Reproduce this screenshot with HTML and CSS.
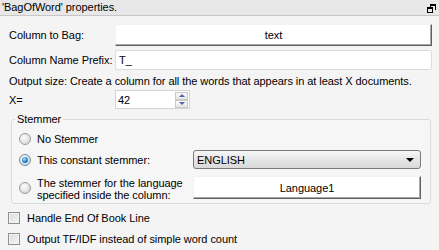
FILE: index.html
```html
<!DOCTYPE html>
<html>
<head>
<meta charset="utf-8">
<link rel="stylesheet" href="styles.css">
</head>
<body>
<div class="panel">
  <div class="titlebar">
    <span class="title">'BagOfWord' properties.</span>
    <svg class="restore" width="9" height="9" viewBox="0 0 9 9">
      <path d="M3 0h6v6h-1v-4h-4v1h-1z" fill="#000"/>
      <rect x="0.5" y="3.5" width="5" height="5" fill="#e8e8e8" stroke="#000"/>
      <rect x="0" y="3" width="6" height="2" fill="#000"/>
    </svg>
  </div>
  <div class="content">
    <div class="form-row row-bag">
      <span class="label">Column to Bag:</span>
      <div class="btn btn-wide">text</div>
    </div>
    <div class="form-row row-prefix">
      <span class="label">Column Name Prefix:</span>
      <div class="input">T_</div>
    </div>
    <div class="note">Output size: Create a column for all the words that appears in at least X documents.</div>
    <div class="form-row row-x">
      <span class="label">X=</span>
      <div class="spinner">
        <span class="spin-val">42</span>
        <div class="spin-btns">
          <span class="spin-btn"><span class="tri-up"></span></span>
          <span class="spin-btn"><span class="tri-down"></span></span>
        </div>
      </div>
    </div>
    <fieldset class="group">
      <legend>Stemmer</legend>
      <div class="opt opt-1">
        <span class="radio"></span>
        <span class="rlabel">No Stemmer</span>
      </div>
      <div class="opt opt-2">
        <span class="radio checked"><span class="dot"></span></span>
        <span class="rlabel">This constant stemmer:</span>
        <div class="combo"><span class="combo-val">ENGLISH</span><span class="combo-arrow"></span></div>
      </div>
      <div class="opt opt-3">
        <span class="radio"></span>
        <span class="rlabel two">The stemmer for the language<br>specified inside the column:</span>
        <div class="btn btn-lang">Language1</div>
      </div>
    </fieldset>
    <div class="check-row first"><span class="checkbox"></span><span class="clabel">Handle End Of Book Line</span></div>
    <div class="check-row"><span class="checkbox"></span><span class="clabel">Output TF/IDF instead of simple word count</span></div>
  </div>
</div>
</body>
</html>
```

FILE: styles.css
```css
html, body {
  margin: 0;
  padding: 0;
  background: #f4f4f4;
}
body {
  font-family: "Liberation Sans", Arial, sans-serif;
  font-size: 11px;
  letter-spacing: -0.06px;
  color: #000;
}
.panel {
  width: 439px;
  height: 250px;
  overflow: hidden;
  background: #f4f4f4;
}
.titlebar {
  height: 15px;
  border-bottom: 1px solid #c6c6c6;
  background: repeating-conic-gradient(#e3e3e3 0 25%, #ececec 0 50%) 0 0 / 2px 2px;
  display: flex;
  align-items: center;
  justify-content: space-between;
  padding: 0 3px 0 2px;
}
.title {
  line-height: 15px;
}
.restore {
  display: block;
  margin-top: 1px;
}
.content {
  padding: 0 7px 0 9px;
}
.form-row {
  display: flex;
  align-items: center;
}
.label {
  width: 106px;
  flex: none;
}
.row-bag { margin-top: 8px; height: 22px; }
.row-prefix { margin-top: 4px; height: 20px; }
.row-x { margin-top: 2px; height: 19px; }
.btn {
  background: #fff;
  box-sizing: border-box;
  border-top: 1px solid #f2f2f2;
  border-left: 1px solid #f2f2f2;
  border-right: 1px solid #5f5f5f;
  border-bottom: 1px solid #5f5f5f;
  box-shadow: inset -1px -1px 0 #a9a9a9;
  display: flex;
  align-items: center;
  justify-content: center;
}
.btn-wide {
  flex: 1;
  height: 22px;
}
.input {
  flex: 1;
  height: 20px;
  box-sizing: border-box;
  background: #fff;
  border: 1px solid #dcdcdc;
  border-radius: 2px;
  padding-left: 3px;
  display: flex;
  align-items: center;
}
.note {
  margin-top: 4px;
  height: 14px;
  line-height: 14px;
  white-space: nowrap;
}
.spinner {
  width: 75px;
  height: 19px;
  box-sizing: border-box;
  background: #fff;
  border: 1px solid #d4d4d4;
  display: flex;
  align-items: center;
  padding-left: 2px;
}
.spin-val {
  flex: 1;
}
.spin-btns {
  width: 13px;
  height: 16px;
  margin-right: 1px;
  display: flex;
  flex-direction: column;
}
.spin-btn {
  flex: 1;
  box-sizing: border-box;
  border: 1px solid #c9c9c9;
  background: linear-gradient(#fbfbfb, #e6e6e6);
  display: flex;
  align-items: center;
  justify-content: center;
}
.tri-up, .tri-down {
  width: 0;
  height: 0;
  border-left: 3px solid transparent;
  border-right: 3px solid transparent;
}
.tri-up { border-bottom: 3px solid #4b67a6; }
.tri-down { border-top: 3px solid #4b67a6; }
.group {
  margin: 3px 1px 0 2px;
  padding: 6px 9px 4px 7px;
  border: 1px solid #d4dce2;
  border-radius: 3px;
  background: #f6f6f6;
  min-width: 0;
}
.group legend {
  margin-left: -4px;
  padding: 0 2px;
  line-height: 14px;
}
.opt {
  display: flex;
  align-items: center;
}
.opt-1 { height: 14px; }
.opt-2 { height: 19px; margin-top: 4px; }
.opt-3 { height: 23px; margin-top: 7px; }
.radio {
  width: 12px;
  height: 12px;
  flex: none;
  box-sizing: border-box;
  border-radius: 50%;
  border: 1px solid #9a9a9a;
  background: radial-gradient(circle at 40% 35%, #fdfdfd 0, #e8e8e8 45%, #cfcfcf 100%);
  margin-right: 6px;
  display: flex;
  align-items: center;
  justify-content: center;
}
.radio.checked {
  border-color: #6f8aa5;
}
.dot {
  width: 6px;
  height: 6px;
  border-radius: 50%;
  background: radial-gradient(circle at 40% 35%, #9fe0ff 0, #2a8ad0 50%, #0f4a8a 100%);
}
.rlabel {
  width: 151px;
  flex: none;
  margin-right: 5px;
  white-space: nowrap;
}
.rlabel.two {
  line-height: 12px;
  margin-top: 3px;
}
.combo {
  flex: 1;
  height: 19px;
  box-sizing: border-box;
  border: 1px solid #7a7a7a;
  border-radius: 3px;
  background: linear-gradient(#f7f7f7, #e6e6e6 50%, #d9d9d9);
  display: flex;
  align-items: center;
  padding: 0 6px 0 3px;
}
.combo-val {
  flex: 1;
}
.combo-arrow {
  width: 0;
  height: 0;
  border-left: 4px solid transparent;
  border-right: 4px solid transparent;
  border-top: 4px solid #000;
}
.btn-lang {
  flex: 1;
  height: 23px;
}
.check-row {
  display: flex;
  align-items: center;
  height: 14px;
  margin-top: 7px;
  margin-left: -1px;
}
.checkbox {
  width: 12px;
  height: 12px;
  box-sizing: border-box;
  border: 1px solid #8e8f8f;
  background: linear-gradient(135deg, #dcdcdc, #f4f4f4);
  box-shadow: inset 0 0 0 1px #f4f4f4;
  margin-right: 7px;
  flex: none;
}
```
